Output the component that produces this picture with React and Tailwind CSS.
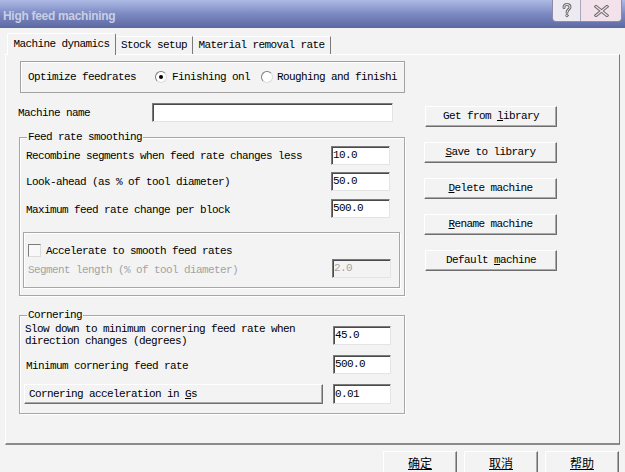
import React from 'react'

const Btn = ({ children, className = '' }) => (
  <div
    className={`flex items-center justify-center bg-[#f3f3f3] border border-t-white border-l-white border-r-[#6e6e6e] border-b-[#6e6e6e] shadow-[inset_-1px_-1px_0_#a9a9a9] ${className}`}
  >
    {children}
  </div>
)

const Field = ({ value = '', disabled = false, className = '' }) => (
  <div
    className={`flex items-center pl-[1px] border border-t-[#7a7a7a] border-l-[#7a7a7a] border-r-[#e4e4e4] border-b-[#e4e4e4] shadow-[inset_1px_1px_0_#4a4a4a] ${
      disabled ? 'bg-[#f3f3f3] text-[#a3a3a3]' : 'bg-white'
    } ${className}`}
  >
    {value}
  </div>
)

const Group = ({ title, className = '', children }) => (
  <div className={`relative border border-[#a7a7a7] shadow-[inset_1px_1px_0_#fff,1px_1px_0_#fff] ${className}`}>
    {title && (
      <span className="absolute left-[7px] -top-[7px] bg-[#f3f3f3] px-[1px] leading-[12px]">{title}</span>
    )}
    {children}
  </div>
)

const Radio = ({ checked }) => (
  <div className="w-[12px] h-[12px] shrink-0 rounded-full bg-white border border-t-[#7d7d7d] border-l-[#7d7d7d] border-r-[#dcdcdc] border-b-[#dcdcdc] flex items-center justify-center">
    {checked && <div className="w-[4px] h-[4px] rounded-full bg-black" />}
  </div>
)

// hollow glyphs on the caption buttons
const HelpGlyph = () => (
  <svg width="10" height="15" viewBox="0 0 10 15">
    <g fill="none" strokeLinecap="round">
      <path d="M2 4.5C2 2.3 3.3 1.5 5 1.5C6.8 1.5 8 2.5 8 4.2C8 6.2 5 6.6 5 9.2" stroke="#707070" strokeWidth="3" />
      <path d="M2 4.5C2 2.3 3.3 1.5 5 1.5C6.8 1.5 8 2.5 8 4.2C8 6.2 5 6.6 5 9.2" stroke="#f1edf3" strokeWidth="1" />
      <circle cx="5" cy="12.5" r="1.3" stroke="#707070" strokeWidth="1" fill="#f1edf3" />
    </g>
  </svg>
)

const CloseGlyph = () => (
  <svg width="15" height="12" viewBox="0 0 15 12">
    <g fill="none" strokeLinecap="square">
      <path d="M2 1.5L13 10.5M13 1.5L2 10.5" stroke="#707070" strokeWidth="3.2" />
      <path d="M2 1.5L13 10.5M13 1.5L2 10.5" stroke="#f4e3ec" strokeWidth="1.2" />
    </g>
  </svg>
)

export default function App() {
  return (
    <div className="w-[625px] h-[472px] overflow-hidden bg-[#f3f3f3] text-black font-['Liberation_Mono',monospace] text-[11px] tracking-[-0.6px]">
      {/* caption */}
      <div className="h-[28px] flex justify-between bg-gradient-to-b from-[#adbae6] via-[#7c89c2] to-[#5c68a2] pl-[3px] pr-[3px]">
        <div className="pt-[9px] leading-[14px] font-['Liberation_Sans',sans-serif] font-bold text-[12px] tracking-[-0.3px] text-[#c9cee4]">
          High feed machining
        </div>
        <div className="flex h-[23px] -mt-[1px] rounded-b-[4px] border border-[#8d8ca6] overflow-hidden">
          <div className="w-[28px] flex items-center justify-center bg-[#eeeaf1] border-r border-[#a9a7bc]">
            <HelpGlyph />
          </div>
          <div className="w-[40px] flex items-center justify-center bg-[#f3e2eb]">
            <CloseGlyph />
          </div>
        </div>
      </div>

      {/* tabs */}
      <div className="mt-[5px] h-[21px] flex items-end pl-[7px]">
        <div className="relative z-10 h-[22px] -mb-px w-[109px] flex items-center justify-center bg-[#f3f3f3] border-t border-l border-white border-r border-r-[#7a7a7a] rounded-t-[2px]">
          Machine dynamics
        </div>
        <div className="h-[18px] w-[77px] flex items-center justify-center border-t border-white border-r border-r-[#7a7a7a]">
          Stock setup
        </div>
        <div className="h-[18px] w-[138px] flex items-center justify-center border-t border-white border-r border-r-[#7a7a7a]">
          Material removal rate
        </div>
      </div>

      {/* tab page */}
      <div className="ml-[5px] w-[615px] h-[391px] border-t border-l border-white border-r border-b-2 border-r-[#7a7a7a] border-b-[#8a8a8a]">
        <div className="mt-[6px] ml-[14px] w-[385px] h-[32px] flex items-center pl-[7px] border border-[#a2a2a2] shadow-[inset_1px_1px_0_#fff] whitespace-nowrap">
          <span className="w-[127px] shrink-0">Optimize feedrates</span>
          <Radio checked />
          <span className="ml-[5px] w-[78px] shrink-0">Finishing onl</span>
          <div className="ml-[11px]">
            <Radio />
          </div>
          <span className="ml-[4px] shrink-0">Roughing and finishi</span>
        </div>

        <div className="flex">
          <div className="ml-[12px] w-[387px] shrink-0">
            <div className="mt-[10px] h-[19px] flex items-center">
              <span className="w-[134px] shrink-0 pt-[2px]">Machine name</span>
              <Field className="w-[241px] h-[19px]" />
            </div>

            <Group title="Feed rate smoothing" className="mt-[15px] ml-[1px] w-[386px] h-[159px]">
              <div className="pt-[8px]">
                <div className="h-[19px] flex items-center pl-[6px]">
                  <span className="w-[305px] shrink-0 pt-[2px]">Recombine segments when feed rate changes less</span>
                  <Field value="10.0" className="w-[59px] h-[19px]" />
                </div>
                <div className="mt-[7px] h-[19px] flex items-center pl-[6px]">
                  <span className="w-[305px] shrink-0 pt-[2px]">Look-ahead (as % of tool diameter)</span>
                  <Field value="50.0" className="w-[59px] h-[19px]" />
                </div>
                <div className="mt-[8px] h-[19px] flex items-center pl-[6px]">
                  <span className="w-[305px] shrink-0 pt-[3px]">Maximum feed rate change per block</span>
                  <Field value="500.0" className="w-[59px] h-[19px]" />
                </div>

                <div className="mt-[14px] ml-[3px] w-[377px] h-[56px] border border-[#a7a7a7] shadow-[inset_1px_1px_0_#fff,1px_1px_0_#fff]">
                  <div className="mt-[11px] h-[13px] flex items-center pl-[4px]">
                    <div className="w-[13px] h-[13px] bg-[#f8f8f8] border border-t-[#7d7d7d] border-l-[#7d7d7d] border-r-[#dcdcdc] border-b-[#dcdcdc]" />
                    <span className="ml-[5px] pt-[2px]">Accelerate to smooth feed rates</span>
                  </div>
                  <div className="mt-[2px] h-[19px] flex items-center pl-[4px]">
                    <span className="w-[304px] shrink-0 pt-[3px] text-[#a3a3a3]">Segment length (% of tool diameter)</span>
                    <Field value="2.0" disabled className="w-[59px] h-[19px]" />
                  </div>
                </div>
              </div>
            </Group>

            <Group title="Cornering" className="mt-[19px] ml-[1px] w-[386px] h-[99px]">
              <div className="pt-[7px]">
                <div className="h-[24px] flex items-center">
                  <span className="w-[313px] shrink-0 pl-[5px] leading-[12px]">
                    Slow down to minimum cornering feed rate when
                    <br />
                    direction changes (degrees)
                  </span>
                  <Field value="45.0" className="w-[58px] h-[19px]" />
                </div>
                <div className="mt-[8px] h-[19px] flex items-center">
                  <span className="w-[313px] shrink-0 pl-[6px] pt-[3px]">Minimum cornering feed rate</span>
                  <Field value="500.0" className="w-[58px] h-[19px]" />
                </div>
                <div className="mt-[10px] h-[20px] flex items-center">
                  <Btn className="ml-[4px] w-[299px] h-[20px] !justify-start pl-[4px]">
                    <span>
                      Cornering acceleration in <u>G</u>s
                    </span>
                  </Btn>
                  <Field value="0.01" className="ml-[10px] w-[58px] h-[20px]" />
                </div>
              </div>
            </Group>
          </div>

          <div className="ml-[20px] mt-[13px] flex flex-col gap-[15px]">
            <Btn className="w-[132px] h-[21px]">
              <span>
                Get from <u>l</u>ibrary
              </span>
            </Btn>
            <Btn className="w-[133px] h-[21px] -ml-px">
              <span>
                <u>S</u>ave to library
              </span>
            </Btn>
            <Btn className="w-[133px] h-[21px] -ml-px">
              <span>
                <u>D</u>elete machine
              </span>
            </Btn>
            <Btn className="w-[133px] h-[21px] -ml-px">
              <span>
                <u>R</u>ename machine
              </span>
            </Btn>
            <Btn className="w-[132px] h-[21px]">
              <span>
                Default <u>m</u>achine
              </span>
            </Btn>
          </div>
        </div>
      </div>

      {/* dialog buttons */}
      <div className="mt-[6px] flex justify-end gap-[7px] pr-[6px] font-['Noto_Sans_CJK_SC',sans-serif] text-[12px] tracking-normal">
        <Btn className="w-[74px] h-[24px]">
          <u>确定</u>
        </Btn>
        <Btn className="w-[74px] h-[24px]">
          <u>取消</u>
        </Btn>
        <Btn className="w-[74px] h-[24px]">
          <u>帮助</u>
        </Btn>
      </div>
    </div>
  )
}
